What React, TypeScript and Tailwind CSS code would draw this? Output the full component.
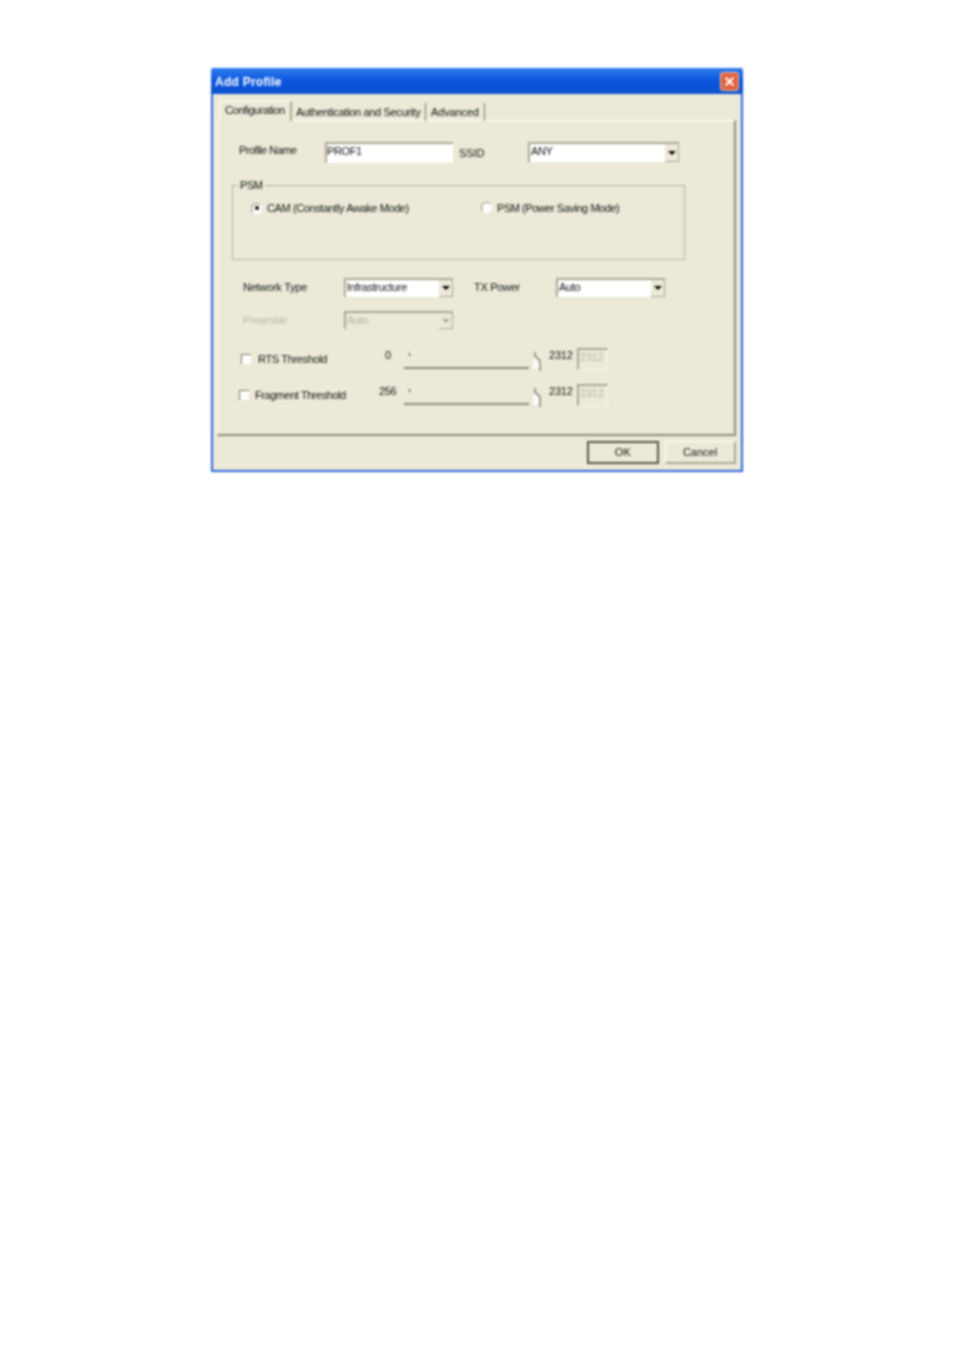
const font = { fontFamily: '"Liberation Sans", Arial, sans-serif' };

function Caret({ disabled }: { disabled?: boolean }) {
  return (
    <div className="w-[14px] h-full bg-[#ece9d8] border-r border-b border-[#a9a794] flex items-center justify-center">
      <div className={`w-0 h-0 border-x-[4px] border-x-transparent border-t-[4px] ${disabled ? "border-t-[#a9a79b]" : "border-t-black"}`} />
    </div>
  );
}

function Select({ value, width, height, disabled }: { value: string; width: string; height: string; disabled?: boolean }) {
  return (
    <div className={`${width} ${height} flex border-t-2 border-l-2 border-[#a9a794] ${disabled ? "bg-[#ece9d8]" : "bg-white"}`}>
      <span className={`flex-1 pl-[1px] text-[11px] leading-[15px] tracking-[-0.35px] ${disabled ? "text-[#b5b3a5]" : "text-[#111]"}`}>{value}</span>
      <Caret disabled={disabled} />
    </div>
  );
}

function Checkbox() {
  return <div className="w-[10px] h-[10px] shrink-0 bg-white border-t border-l border-[#77756a]" />;
}

function Radio({ checked }: { checked?: boolean }) {
  return (
    <div className="w-[11px] h-[11px] shrink-0 rounded-full bg-white border border-[#8f8d80] border-r-white border-b-white flex items-center justify-center">
      {checked && <div className="w-[4px] h-[4px] rounded-full bg-black" />}
    </div>
  );
}

function Slider() {
  return (
    <div className="relative w-[136px] h-[24px]">
      <div className="absolute left-0 top-[19px] w-[125px] h-[2px] bg-[#8c8a7c]" />
      <div className="absolute left-[5px] top-[5px] w-px h-[3px] bg-[#333]" />
      <svg className="absolute left-[128px] top-[3px]" width="10" height="20" viewBox="0 0 10 20" fill="none">
        <path d="M1 11 L1 18 L8 18 L8 11 L3 5" fill="#fbfaf4" />
        <path d="M3 1 L3 5 L8 10 L8 20" stroke="#6a685e" strokeWidth="1.2" />
      </svg>
    </div>
  );
}

function ValueBox() {
  return (
    <div className="w-[31px] h-[22px] bg-[#ece9d8] border-t-2 border-l-2 border-[#a9a794] border-r border-b border-r-[#f9f7ef] border-b-[#f9f7ef] pl-px text-[11px] leading-[15px] tracking-[-0.2px] text-[#b9b7a9]">
      2312
    </div>
  );
}

function TitleBar() {
  return (
    <div className="h-[26px] flex items-center justify-between pl-[4px] pr-[4px] rounded-t-[2px] bg-gradient-to-b from-[#2f7df0] via-[#0a55dc] to-[#0d52d0]">
      <span className="text-white font-bold text-[12px] tracking-[0.25px] mt-[2px]">Add Profile</span>
      <div className="w-[19px] h-[19px] rounded-[3px] bg-[#e0603c] border border-[#f3c6b4] flex items-center justify-center">
        <svg width="11" height="11" viewBox="0 0 11 11">
          <path d="M1.5 1.5 L9.5 9.5 M9.5 1.5 L1.5 9.5" stroke="#fff" strokeWidth="2" />
        </svg>
      </div>
    </div>
  );
}

function Tabs() {
  return (
    <div className="h-[26px] pl-[6px] flex items-end text-[11px] text-[#111]">
      <div className="w-[73px] h-[20px] pl-[5px] leading-[16px] tracking-[-0.45px] border-t border-l border-white border-r-2 border-r-[#a9a794] bg-[#ece9d8] relative top-px">
        Configuration
      </div>
      <div className="w-[134px] h-[18px] pl-[4px] mb-[-1px] leading-[18px] tracking-[-0.35px] border-r border-[#77756a]">
        Authentication and Security
      </div>
      <div className="w-[59px] h-[18px] pl-[5px] mb-[-1px] leading-[18px] tracking-[-0.15px] border-r border-[#77756a]">Advanced</div>
    </div>
  );
}

function Pane() {
  return (
    <div className="ml-[4px] w-[519px] h-[316px] border-t border-l border-white border-r-2 border-b-2 border-r-[#8c8a7c] border-b-[#8c8a7c] text-[11px] text-[#111]">
      <div className="mt-[21px] ml-[21px] flex h-[21px]">
        <span className="w-[86px] leading-[17px] tracking-[-0.5px]">Profile Name</span>
        <div className="w-[128px] h-[21px] bg-white border-t-2 border-l-2 border-[#a9a794] leading-[15px] tracking-[-0.4px] text-[#111]">PROF1</div>
        <span className="ml-[6px] w-[69px] pt-[3px] leading-[17px] tracking-[-0.1px]">SSID</span>
        <Select value="ANY" width="w-[151px]" height="h-[20px]" />
      </div>

      <div className="relative mt-[22px] ml-[14px] w-[453px] h-[75px] border border-[#b5b3a3]">
        <span className="absolute left-[5px] top-[-7px] px-[2px] bg-[#ece9d8] leading-[13px] tracking-[-0.4px]">PSM</span>
        <div className="flex pt-[14px]">
          <div className="ml-[18px] w-[230px] flex items-center gap-[5px]">
            <Radio checked />
            <span className="tracking-[-0.4px]">CAM (Constantly Awake Mode)</span>
          </div>
          <div className="flex items-center gap-[5px] -mt-px">
            <Radio />
            <span className="tracking-[-0.45px]">PSM (Power Saving Mode)</span>
          </div>
        </div>
      </div>

      <div className="mt-[18px] ml-[25px] flex h-[19px]">
        <span className="w-[101px] leading-[18px] tracking-[-0.25px]">Network Type</span>
        <Select value="Infrastructure" width="w-[109px]" height="h-[19px]" />
        <span className="ml-[21px] w-[82px] leading-[18px] tracking-[-0.3px]">TX Power</span>
        <Select value="Auto" width="w-[109px]" height="h-[19px]" />
      </div>

      <div className="mt-[14px] ml-[25px] flex h-[18px]">
        <span className="w-[101px] leading-[18px] tracking-[-0.35px] text-[#bdbbad]">Preamble</span>
        <Select value="Auto" width="w-[109px]" height="h-[18px]" disabled />
      </div>

      <div className="mt-[19px] ml-[23px] flex h-[22px]">
        <div className="w-[132px] mt-[6px] flex gap-[7px] h-[10px] items-center">
          <Checkbox />
          <span className="tracking-[-0.35px] whitespace-nowrap">RTS Threshold</span>
        </div>
        <span className="w-[18px] leading-[14px] text-right">0</span>
        <div className="ml-[13px]"><Slider /></div>
        <span className="ml-[9px] w-[28px] leading-[14px] tracking-[-0.2px]">2312</span>
        <ValueBox />
      </div>

      <div className="mt-[14px] ml-[21px] flex h-[22px]">
        <div className="w-[140px] mt-[6px] flex gap-[6px] h-[10px] items-center">
          <Checkbox />
          <span className="tracking-[-0.45px] whitespace-nowrap">Fragment Threshold</span>
        </div>
        <span className="w-[18px] leading-[14px] tracking-[-0.4px]">256</span>
        <div className="ml-[7px]"><Slider /></div>
        <span className="ml-[9px] w-[28px] leading-[14px] tracking-[-0.2px]">2312</span>
        <ValueBox />
      </div>
    </div>
  );
}

export default function App() {
  return (
    <div className="min-h-[1351px] bg-white pt-[68px] pl-[211px]" style={font}>
      <div className="w-[532px] h-[404px] flex flex-col blur-[0.85px]">
        <TitleBar />
        <div className="flex-1 bg-[#ece9d8] border-x-2 border-b-2 border-[#2c63dc]">
          <Tabs />
          <Pane />
          <div className="mt-[5px] ml-[374px] flex gap-[6px] text-[11px] text-[#111]">
            <button className="w-[72px] h-[23px] border-2 border-[#55534a] bg-[#ece9d8] tracking-[0.3px]">OK</button>
            <button className="w-[71px] h-[23px] border-t border-l border-white border-r-2 border-b-2 border-r-[#a9a794] border-b-[#a9a794] bg-[#ece9d8]">Cancel</button>
          </div>
        </div>
      </div>
    </div>
  );
}
